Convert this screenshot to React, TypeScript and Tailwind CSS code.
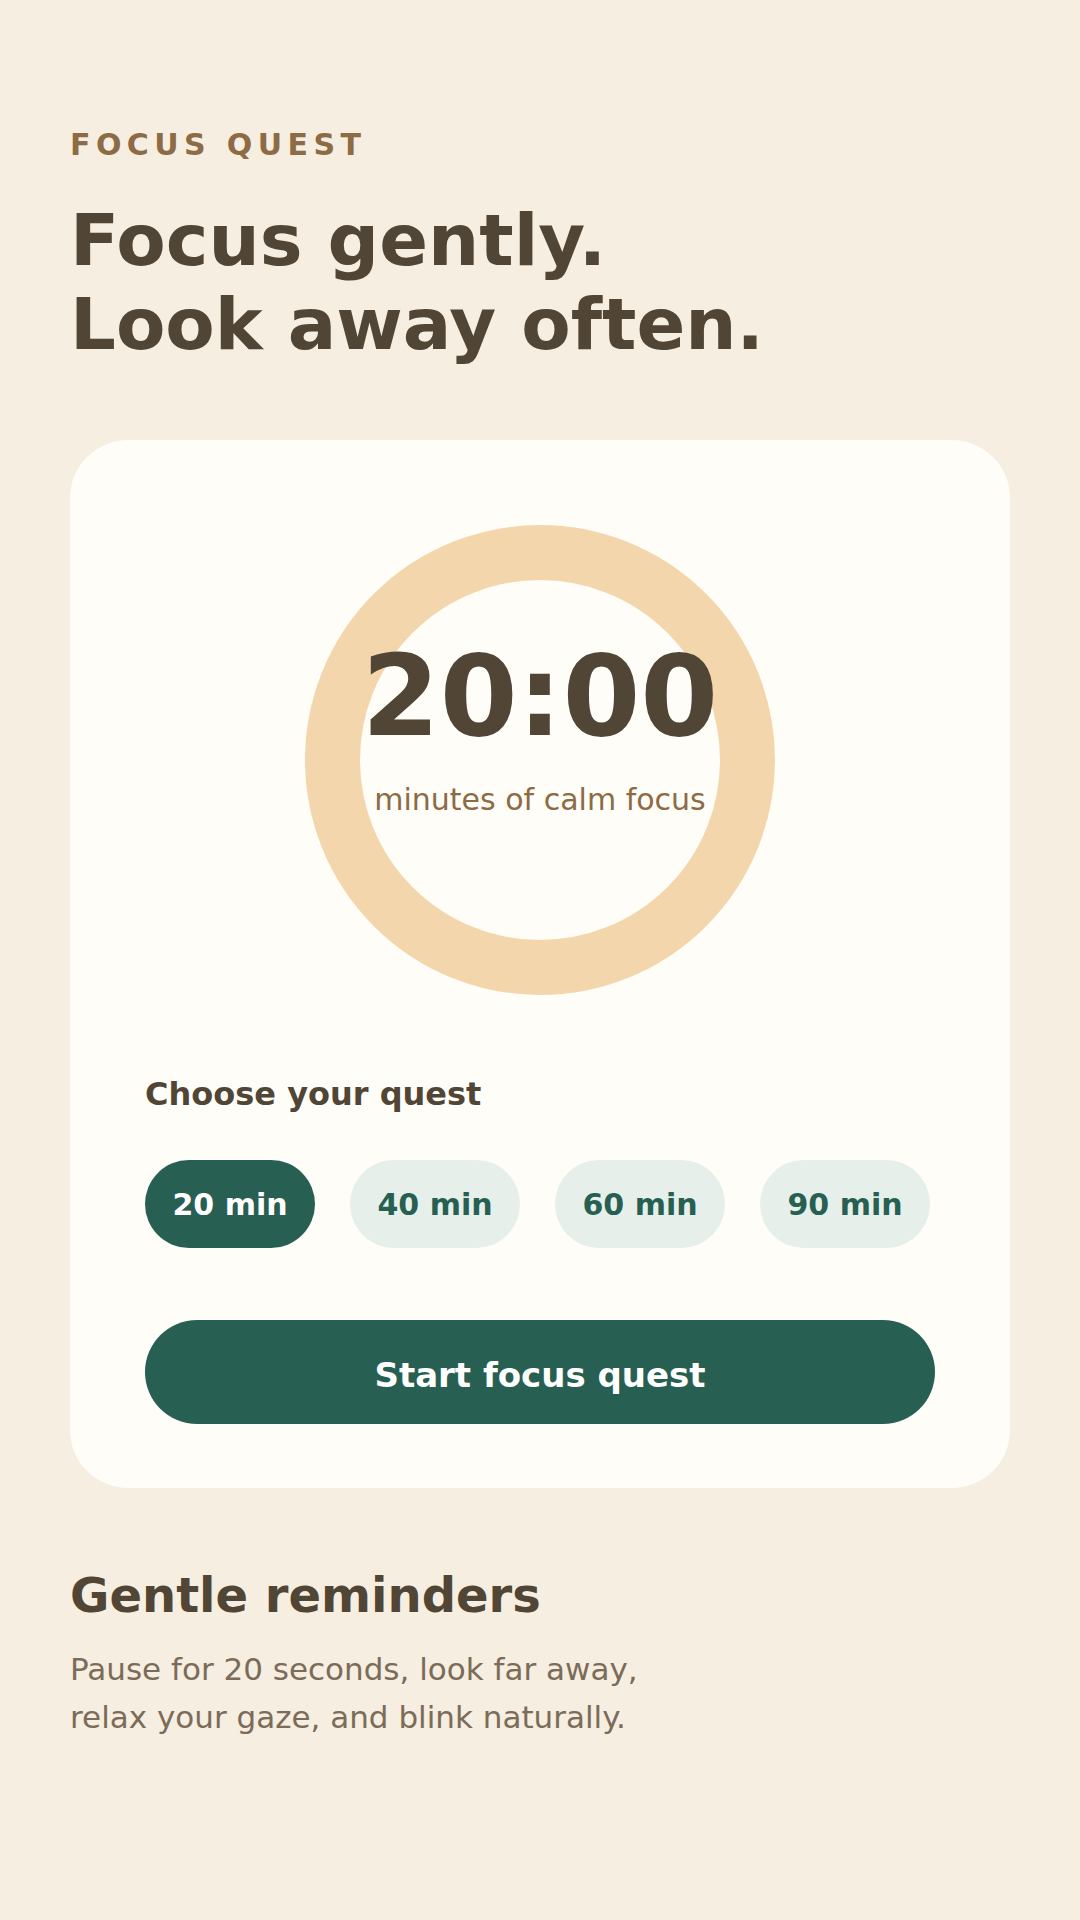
import React from "react";

export default function App() {
  const chips = ["20 min", "40 min", "60 min", "90 min"];
  return (
    <div className="min-h-[1920px] w-full bg-[#f6eee0] px-[70px] pt-[127px] font-['DejaVu_Sans',sans-serif]">
      <div className="text-[30px] leading-[36px] font-bold tracking-[0.18em] text-[#8c6b45]">
        FOCUS QUEST
      </div>
      <h1 className="mt-[35px] text-[72px] leading-[84px] font-bold text-[#514535]">
        Focus gently.
        <br />
        Look away often.
      </h1>

      <div className="mt-[74px] w-[940px] rounded-[58px] bg-[#fffdf8] pt-[85px] pb-[64px] px-[75px]">
        <div className="flex justify-center">
          <div className="flex h-[470px] w-[470px] flex-col items-center rounded-full border-[55px] border-[#f4d6ad] pt-[60px]">
            <div className="whitespace-nowrap text-[112px] leading-none font-bold text-[#514535]">
              20:00
            </div>
            <div className="mt-[30px] whitespace-nowrap text-[30px] leading-[36px] text-[#8c6b45]">
              minutes of calm focus
            </div>
          </div>
        </div>

        <div className="mt-[79px] text-[32px] leading-[40px] font-bold text-[#514535]">
          Choose your quest
        </div>
        <div className="mt-[46px] flex gap-[35px]">
          {chips.map((c, i) => (
            <button
              key={c}
              className={
                i === 0
                  ? "flex h-[88px] w-[170px] items-center justify-center rounded-full bg-[#275f52] text-[30px] font-bold text-white"
                  : "flex h-[88px] w-[170px] items-center justify-center rounded-full bg-[#e6efea] text-[30px] font-bold text-[#275f52]"
              }
            >
              {c}
            </button>
          ))}
        </div>
        <button className="mt-[72px] flex h-[104px] w-full items-center justify-center rounded-full bg-[#275f52] pt-[6px] text-[34px] font-bold text-white">
          Start focus quest
        </button>
      </div>

      <h2 className="mt-[79px] text-[48px] leading-[56px] font-bold text-[#514535]">
        Gentle reminders
      </h2>
      <p className="mt-[22px] max-w-[620px] text-[31px] leading-[48px] text-[#7b6b59]">
        Pause for 20 seconds, look far away, relax your gaze, and blink naturally.
      </p>
    </div>
  );
}
